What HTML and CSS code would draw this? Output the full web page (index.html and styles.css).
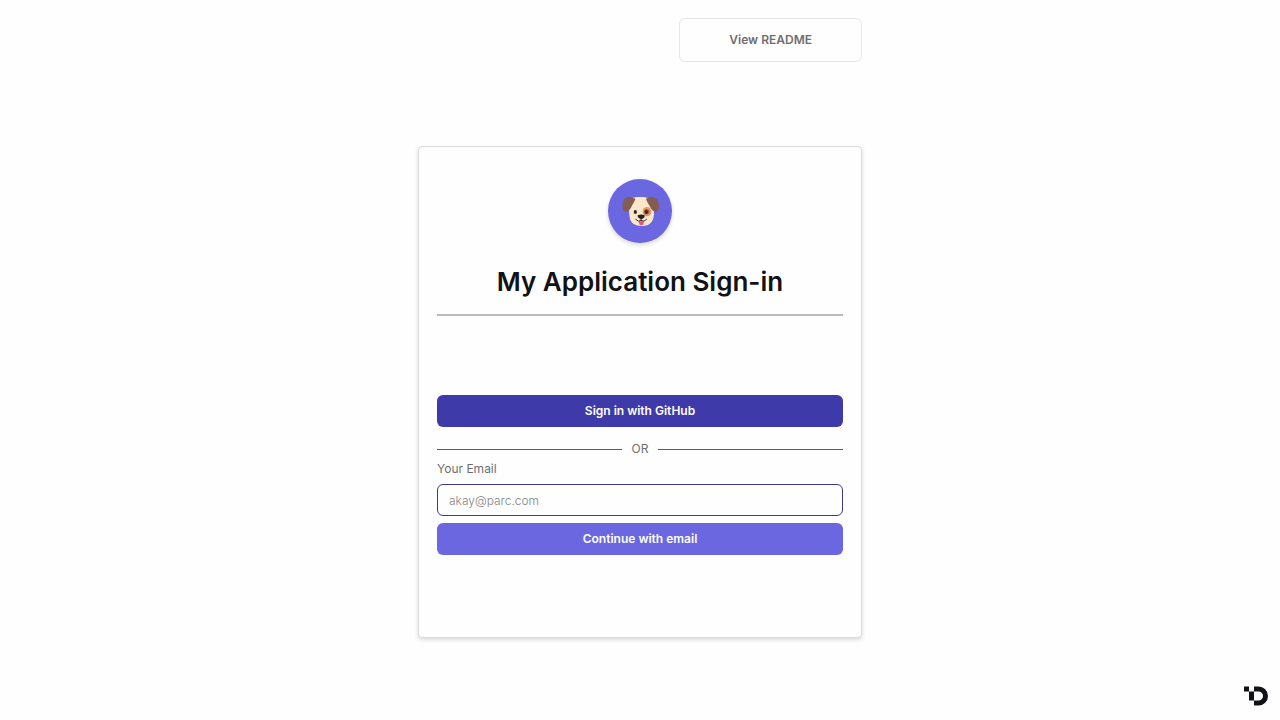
FILE: index.html
```html
<!DOCTYPE html>
<html lang="en">
<head>
<meta charset="utf-8">
<meta name="viewport" content="width=device-width, initial-scale=1">
<title>My Application Sign-in</title>
<link rel="stylesheet" href="styles.css">
</head>
<body>
<div class="page">
  <header class="toolbar">
    <button class="readme" type="button">View README</button>
  </header>
  <main class="card">
    <div class="avatar">
      <svg class="dog" viewBox="0 0 120 120" aria-hidden="true">
        <path fill="#fbe8cb" d="M31 26C40 19 80 19 90 26C100 38 104 63 101 80C97 101 83 108 65 108C46 108 32 101 29 82C26 62 27 39 31 26Z"/>
        <ellipse cx="81" cy="65" rx="13" ry="14" fill="#de9b66"/>
        <circle cx="80" cy="65" r="8" fill="#b5583e"/>
        <path fill="#855c52" d="M38 23C26 19 15 21 11 30C7 42 6 55 12 63C19 69 28 62 33 53C37 43 44 35 46 26Z"/>
        <path fill="#855c52" d="M84 23C96 18 109 22 113 31C118 43 119 56 113 63C104 69 96 62 91 52C87 43 80 35 78 26Z"/>
        <ellipse cx="46" cy="66" rx="5" ry="6" fill="#38272c"/>
        <ellipse cx="79" cy="66" rx="5" ry="6" fill="#38272c"/>
        <path fill="#ef4f80" d="M57 92Q63 95 71 92V99Q71 106 64 106Q57 106 57 99Z"/>
        <path fill="none" stroke="#42312f" stroke-width="3" stroke-linecap="round" d="M47 88Q56 98 63 91Q72 98 80 88M63 82V91"/>
        <path fill="#252326" d="M53 76Q63 71 74 76Q76 84 64 88Q51 84 53 76Z"/>
      </svg>
    </div>
    <h1 class="title">My Application Sign-in</h1>
    <form class="form">
      <button class="button github" type="button">Sign in with GitHub</button>
      <div class="separator">OR</div>
      <label class="label" for="email">Your Email</label>
      <input class="input" id="email" type="email" placeholder="akay@parc.com">
      <button class="button continue" type="button">Continue with email</button>
    </form>
  </main>
</div>
<svg class="brand" viewBox="0 0 24 20" role="img" aria-label="Brand">
  <path fill="#111216" d="M0 0.5H5V5.5H0ZM5 5.5H10V14.5H5ZM10 0.5H14.5A9.5 9.5 0 0 1 14.5 19.5H10V14.5H14.5A4.5 4.5 0 0 0 14.5 5.5H10Z"/>
</svg>
</body>
</html>
```
FILE: styles.css
```css
*, *::before, *::after { box-sizing: border-box; }
body {
  margin: 0;
  background: #fefefe;
  color: #6f6e6e;
  font-family: Inter, "Liberation Sans", sans-serif;
  font-size: 12px;
  line-height: 16px;
}
button, input { font: inherit; }
.page {
  width: 100%;
  max-width: 480px;
  margin: 0 auto;
  padding: 18px;
}
.toolbar {
  display: flex;
  justify-content: flex-end;
  margin-bottom: 84px;
}
.readme {
  padding: 13px 49px;
  border: 1px solid #e6e6e6;
  border-radius: 6px;
  background: #fefefe;
  color: #6f6e6e;
  font-weight: 600;
}
.card {
  padding: 32px 18px 82px;
  border: 1px solid #dcdcdf;
  border-radius: 4px;
  background: #fefefe;
  box-shadow: 0 2px 4px rgba(0, 0, 0, 0.14);
}
.avatar {
  display: grid;
  place-items: center;
  width: 64px;
  height: 64px;
  margin: 0 auto 19px;
  border-radius: 50%;
  background: #6a67e1;
  box-shadow: 0 2px 4px rgba(0, 0, 0, 0.16);
}
.dog { width: 40px; height: 40px; margin-bottom: 2px; }
.title {
  margin: 0;
  padding-bottom: 12px;
  border-bottom: 2px solid #bababb;
  color: #111216;
  font-size: 26px;
  font-weight: 600;
  line-height: 40px;
  text-align: center;
}
.form {
  display: flex;
  flex-direction: column;
  padding-top: 79px;
}
.button {
  height: 32px;
  padding: 0 12px;
  border: 0;
  border-radius: 6px;
  color: #fefefe;
  font-weight: 600;
}
.github { background: #3e3aaa; }
.continue { background: #6a67e1; }
.separator {
  display: flex;
  align-items: center;
  gap: 10px;
  margin: 14px 0 4px;
}
.separator::before, .separator::after {
  content: "";
  flex: 1;
  height: 1px;
  background: #5c5a60;
}
.label { margin-bottom: 7px; }
.input {
  width: 100%;
  height: 32px;
  margin-bottom: 7px;
  padding: 0 11px;
  border: 1px solid #3e3a94;
  border-radius: 6px;
  background: #fefefe;
  color: #111216;
}
.input::placeholder { color: #858585; opacity: 1; font-weight: 300; }
.brand {
  position: fixed;
  right: 12px;
  bottom: 14px;
  width: 24px;
  height: 20px;
}
```
